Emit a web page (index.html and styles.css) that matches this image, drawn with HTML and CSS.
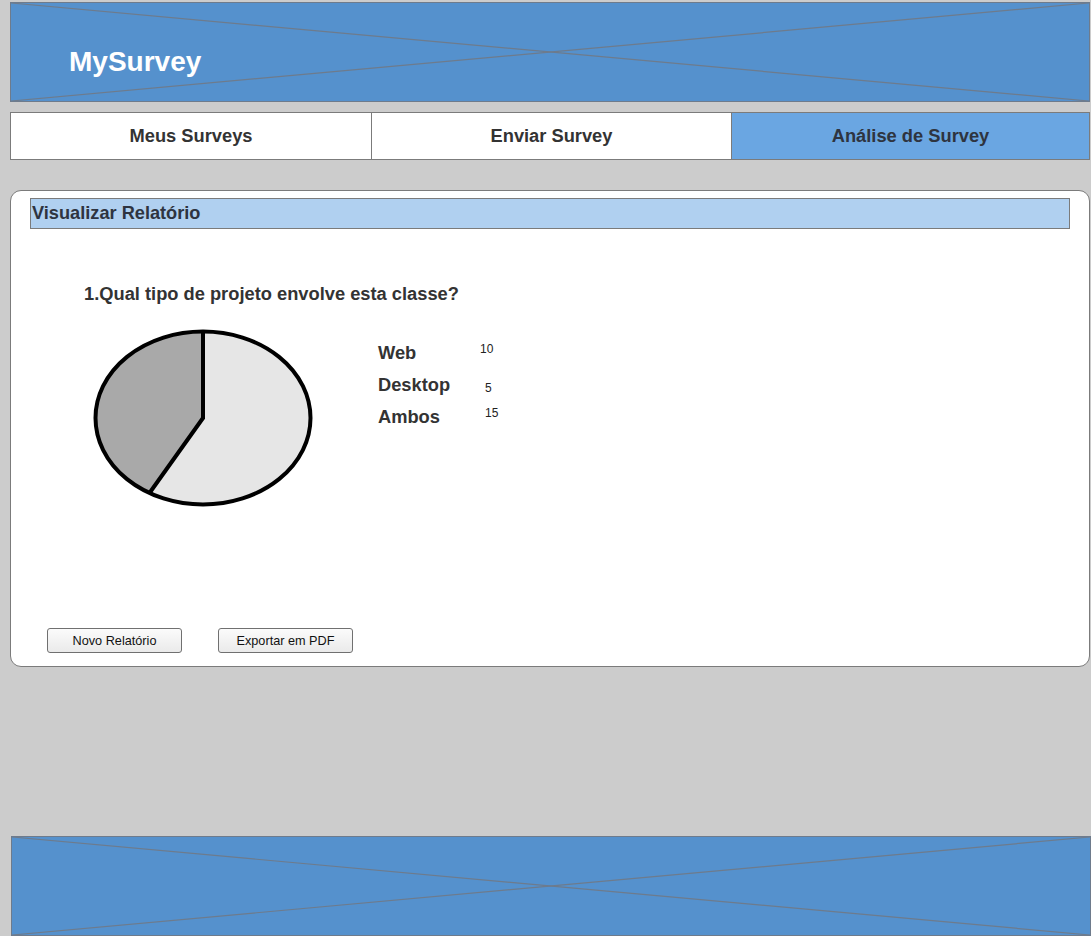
FILE: index.html
```html
<!DOCTYPE html>
<html lang="pt">
<head>
<meta charset="utf-8">
<title>MySurvey</title>
<link rel="stylesheet" href="styles.css">
</head>
<body>
<div class="page">
  <header class="banner">
    <svg class="cross" viewBox="0 0 100 100" preserveAspectRatio="none" aria-hidden="true">
      <line x1="0" y1="0" x2="100" y2="100" vector-effect="non-scaling-stroke"/>
      <line x1="0" y1="100" x2="100" y2="0" vector-effect="non-scaling-stroke"/>
    </svg>
    <h1 class="brand">MySurvey</h1>
  </header>

  <nav class="tabs">
    <div class="tab">Meus Surveys</div>
    <div class="tab">Enviar Survey</div>
    <div class="tab active">Análise de Survey</div>
  </nav>

  <section class="panel">
    <h2 class="panel-title">Visualizar Relatório</h2>
    <h3 class="question">1.Qual tipo de projeto envolve esta classe?</h3>
    <div class="chart-row">
      <svg class="pie" width="220" height="178" viewBox="0 0 220 178" aria-hidden="true">
        <ellipse cx="110" cy="89" rx="107.5" ry="86.5" fill="#e6e6e6"/>
        <path d="M110 2.5 L110 89 L56.5 164 A107.5 86.5 0 0 1 110 2.5 Z" fill="#a9a9a9"/>
        <path d="M110 2.5 L110 89 L56.5 164" fill="none" stroke="#000" stroke-width="4" stroke-linejoin="miter"/>
        <ellipse cx="110" cy="89" rx="107.5" ry="86.5" fill="none" stroke="#000" stroke-width="4"/>
      </svg>
      <div class="legend">
        <div class="legend-item"><span class="label">Web</span><span class="num top n-web">10</span></div>
        <div class="legend-item"><span class="label">Desktop</span><span class="num bottom">5</span></div>
        <div class="legend-item"><span class="label">Ambos</span><span class="num top">15</span></div>
      </div>
    </div>
    <div class="actions">
      <button class="btn" type="button">Novo Relatório</button>
      <button class="btn" type="button">Exportar em PDF</button>
    </div>
  </section>

  <footer class="banner footer">
    <svg class="cross" viewBox="0 0 100 100" preserveAspectRatio="none" aria-hidden="true">
      <line x1="0" y1="0" x2="100" y2="100" vector-effect="non-scaling-stroke"/>
      <line x1="0" y1="100" x2="100" y2="0" vector-effect="non-scaling-stroke"/>
    </svg>
  </footer>
</div>
</body>
</html>
```

FILE: styles.css
```css
html, body {
  margin: 0;
  padding: 0;
  background: #cccccc;
  font-family: "Liberation Sans", Arial, sans-serif;
  color: #333333;
}

.page {
  width: 1091px;
  height: 936px;
  overflow: hidden;
  padding-top: 2px;
  box-sizing: border-box;
}

.banner {
  position: relative;
  margin: 0 0 0 10px;
  width: 1080px;
  height: 100px;
  box-sizing: border-box;
  background: #5591cd;
  border: 1px solid #6e7b8c;
  display: flex;
  align-items: center;
}

.cross {
  position: absolute;
  left: 0;
  top: 0;
  width: 100%;
  height: 100%;
}

.cross line {
  stroke: #6e7b8c;
  stroke-width: 1.2;
}

.brand {
  position: relative;
  margin: 19px 0 0 58px;
  font-size: 28px;
  font-weight: bold;
  color: #ffffff;
}

.tabs {
  margin: 10px 0 0 10px;
  width: 1080px;
  height: 48px;
  box-sizing: border-box;
  display: grid;
  grid-template-columns: 360px 360px 1fr;
  border: 1px solid #7b7b7b;
  background: #ffffff;
}

.tab {
  display: flex;
  align-items: center;
  justify-content: center;
  font-size: 18.3px;
  font-weight: bold;
  color: #333333;
}

.tab + .tab {
  border-left: 1px solid #7b7b7b;
}

.tab.active {
  background: #6aa6e2;
  color: #2e3440;
}

.panel {
  margin: 30px 0 0 10px;
  width: 1080px;
  height: 477px;
  box-sizing: border-box;
  background: #ffffff;
  border: 1px solid #7b7b7b;
  border-radius: 11px;
  padding: 7px 19px 0 19px;
  display: flex;
  flex-direction: column;
}

.panel-title {
  margin: 0;
  height: 31px;
  box-sizing: border-box;
  background: #b0d0f0;
  border: 1px solid #7b7b7b;
  padding-left: 1px;
  display: flex;
  align-items: center;
  font-size: 18.2px;
  font-weight: bold;
  color: #2e3440;
}

.question {
  margin: 54px 0 0 54px;
  font-size: 18.3px;
  font-weight: bold;
  color: #333333;
}

.chart-row {
  margin: 24px 0 0 63px;
  display: flex;
  align-items: flex-start;
}

.pie {
  display: block;
}

.legend {
  margin: 13px 0 0 65px;
  display: flex;
  flex-direction: column;
  gap: 11px;
}

.legend-item {
  display: flex;
  height: 21px;
}

.label {
  width: 107px;
  font-size: 18.3px;
  font-weight: bold;
  color: #333333;
  line-height: 21px;
}

.num {
  font-size: 12px;
  color: #222222;
  line-height: 14px;
}

.num.top { align-self: flex-start; margin-top: 0; }
.num.bottom { align-self: flex-end; }
.num.n-web { margin-left: -5px; }

.actions {
  margin-top: auto;
  margin-bottom: 13px;
  margin-left: 17px;
  display: flex;
  gap: 36px;
}

.btn {
  width: 135px;
  height: 25px;
  box-sizing: border-box;
  border: 1px solid #707070;
  border-radius: 3px;
  background: linear-gradient(#fbfbfb, #eaeaea);
  font-family: "Liberation Sans", Arial, sans-serif;
  font-size: 12.7px;
  color: #111111;
  padding: 0;
}

.footer {
  margin: 169px 0 0 11px;
}
```
